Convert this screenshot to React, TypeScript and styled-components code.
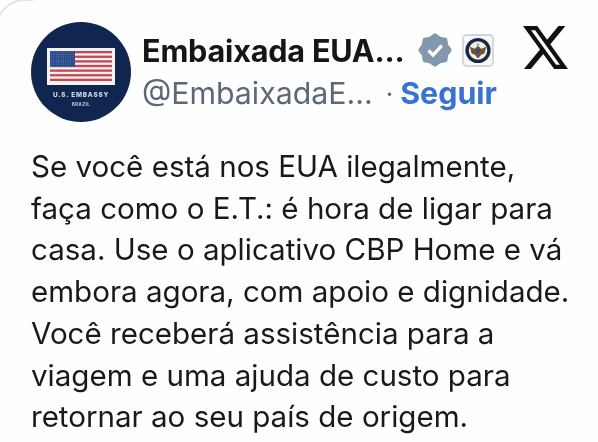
import styled, { createGlobalStyle } from "styled-components";

const GlobalStyle = createGlobalStyle`
  html, body {
    margin: 0;
    padding: 0;
    background: #fefefe;
  }
  body {
    font-family: Inter, "Liberation Sans", sans-serif;
  }
`;

const Card = styled.article`
  width: 598px;
  height: 442px;
  box-sizing: border-box;
  padding: 22px 0 0 31px;
  overflow: hidden;
  position: relative;
  filter: blur(0.35px);
`;

const CornerArc = styled.div`
  position: absolute;
  top: -1px;
  left: -5px;
  width: 60px;
  height: 60px;
  border-radius: 30px 0 0 0;
  border-top: 2px solid #e4e4e4;
  border-left: 2px solid #e4e4e4;
  border-right: 0 solid transparent;
  border-bottom: 0 solid transparent;
  mask-image: linear-gradient(135deg, #000 30%, transparent 34%);
`;

const Header = styled.header`
  display: flex;
  align-items: flex-start;
  height: 100px;
`;

const Avatar = styled.svg`
  width: 100px;
  height: 100px;
  flex: none;
  display: block;
`;

const Identity = styled.div`
  margin-left: 11px;
  width: 381px;
  display: flex;
  flex-direction: column;
  gap: 1px;
`;

const NameRow = styled.div`
  display: flex;
  align-items: center;
  height: 48px;
  margin-top: 4px;
`;

const Name = styled.span`
  font-size: 30.6px;
  font-weight: 700;
  color: #14171a;
  letter-spacing: -0.2px;
  white-space: nowrap;
  width: 262px;
  flex: none;
`;

const Badge = styled.svg`
  width: 34px;
  height: 34px;
  margin-left: 14px;
  flex: none;
`;

const Seal = styled.svg`
  width: 32px;
  height: 33px;
  margin-left: 10px;
  flex: none;
`;

const HandleRow = styled.div`
  display: flex;
  align-items: center;
  height: 36px;
  white-space: nowrap;
`;

const Handle = styled.span`
  font-size: 30.3px;
  color: #5b6875;
`;

const Dot = styled.span`
  font-size: 26px;
  color: #5b6875;
  margin-left: 13px;
`;

const Follow = styled.span`
  font-size: 30.4px;
  font-weight: 700;
  color: #3873cf;
  margin-left: 7px;
`;

const XMark = styled.svg`
  width: 45px;
  height: 43px;
  flex: none;
  margin-top: 4px;
`;

const Body = styled.p`
  margin: 24px 0 0;
  font-size: 29.55px;
  line-height: 41.7px;
  color: #17191c;
  white-space: pre-line;
`;

const AvatarCaption = styled.text`
  font-family: Inter, sans-serif;
  font-weight: 800;
  text-anchor: middle;
`;

const tweet = `Se você está nos EUA ilegalmente,
faça como o E.T.: é hora de ligar para
casa. Use o aplicativo CBP Home e vá
embora agora, com apoio e dignidade.
Você receberá assistência para a
viagem e uma ajuda de custo para
retornar ao seu país de origem.`;

const stripes = Array.from({ length: 7 }, (_, i) => i);

// eight soft points round the verified badge
const badgePoints = Array.from({ length: 16 }, (_, i) => {
  const angle = (i * Math.PI) / 8 - Math.PI / 2;
  const radius = i % 2 === 0 ? 14.6 : 12.2;
  return `${17 + radius * Math.cos(angle)},${17 + radius * Math.sin(angle)}`;
}).join(" ");

export default function App() {
  return (
    <>
      <GlobalStyle />
      <Card>
        <CornerArc />
        <Header>
          <Avatar viewBox="0 0 100 100">
            <defs>
              <pattern id="stars" width="2.4" height="2.4" patternUnits="userSpaceOnUse">
                <rect width="2.4" height="2.4" fill="#2b4a8a" />
                <circle cx="1.2" cy="1.2" r="0.5" fill="#7f95c2" />
              </pattern>
            </defs>
            <circle cx="50" cy="50" r="50" fill="#10254f" />
            <rect x="16" y="26" width="68" height="37" fill="#f4f1f1" />
            {stripes.map((i) => (
              <rect key={i} x="19" y={29 + i * 4.62} width="62" height="2.31" fill="#c34a55" />
            ))}
            <rect x="19" y="29" width="25" height="16" fill="url(#stars)" />
            <AvatarCaption x="50" y="75" fontSize="6.4" letterSpacing="0.8" fill="#d3d9e4">
              U.S. EMBASSY
            </AvatarCaption>
            <AvatarCaption x="50" y="83.5" fontSize="4.2" letterSpacing="0.5" fill="#c3cbd8">
              BRAZIL
            </AvatarCaption>
          </Avatar>
          <Identity>
            <NameRow>
              <Name>Embaixada EUA...</Name>
              <Badge viewBox="0 0 34 34">
                <polygon points={badgePoints} fill="#8298ad" stroke="#8298ad" strokeWidth="4" strokeLinejoin="round" />
                <path d="M10.5 17.5l4.6 4.6 8.6-9.4" fill="none" stroke="#fff" strokeWidth="3.4" />
              </Badge>
              <Seal viewBox="0 0 32 33">
                <rect x="1" y="1" width="30" height="31" rx="3.5" fill="#f7f8fa" stroke="#d0d6dd" strokeWidth="1.8" />
                <circle cx="16" cy="16.5" r="12.6" fill="#1a2744" />
                <circle cx="16" cy="16.5" r="9.2" fill="#f3f1e8" />
                <path d="M7.8 12.8l5 2 3.2-3 3.2 3 5-2-1.8 6.8-3.2 1.2-3.2 3.6-3.2-3.6-3.2-1.2z" fill="#6f5430" />
                <rect x="14.2" y="14.8" width="3.6" height="4.8" fill="#34507e" />
                <circle cx="16" cy="10.4" r="1.5" fill="#9db6d0" />
              </Seal>
            </NameRow>
            <HandleRow>
              <Handle>@EmbaixadaE...</Handle>
              <Dot>·</Dot>
              <Follow>Seguir</Follow>
            </HandleRow>
          </Identity>
          <XMark viewBox="1.25 2.25 21.55 19.5" preserveAspectRatio="none">
            <path
              fill="#111"
              d="M18.244 2.25h3.308l-7.227 8.26 8.502 11.24H16.17l-5.214-6.817L4.99 21.75H1.68l7.73-8.835L1.254 2.25H8.08l4.713 6.231zm-1.161 17.52h1.833L7.084 4.126H5.117z"
            />
          </XMark>
        </Header>
        <Body>{tweet}</Body>
      </Card>
    </>
  );
}
